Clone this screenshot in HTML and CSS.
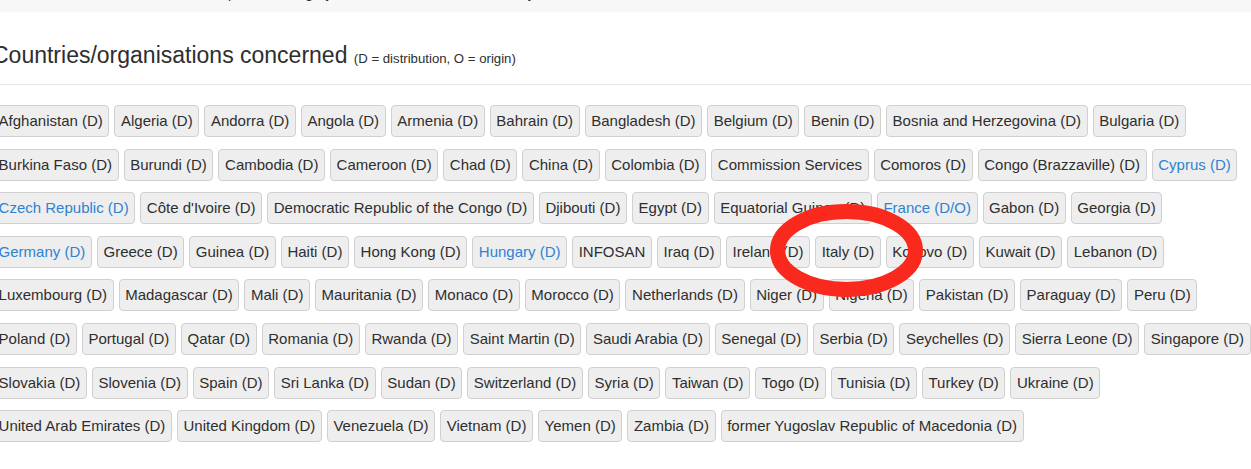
FILE: index.html
```html
<!DOCTYPE html>
<html lang="en">
<head>
    <meta charset="UTF-8">
    <title>Countries/organisations concerned</title>
    <link rel="stylesheet" href="styles.css">
</head>
<body>

    <!-- Strip of the block above -->
    <div class="topbar">
        <p>Notification details and the product category are listed above in the summary of this notification for the members of the network</p>
    </div>

    <div class="section">
        <h3 class="section-title">Countries/organisations concerned <small>(D = distribution, O = origin)</small></h3>

        <div class="tags">
            <span class="tag">Afghanistan (D)</span>
            <span class="tag">Algeria (D)</span>
            <span class="tag">Andorra (D)</span>
            <span class="tag">Angola (D)</span>
            <span class="tag">Armenia (D)</span>
            <span class="tag">Bahrain (D)</span>
            <span class="tag">Bangladesh (D)</span>
            <span class="tag">Belgium (D)</span>
            <span class="tag">Benin (D)</span>
            <span class="tag">Bosnia and Herzegovina (D)</span>
            <span class="tag">Bulgaria (D)</span>
            <span class="tag">Burkina Faso (D)</span>
            <span class="tag">Burundi (D)</span>
            <span class="tag">Cambodia (D)</span>
            <span class="tag">Cameroon (D)</span>
            <span class="tag">Chad (D)</span>
            <span class="tag">China (D)</span>
            <span class="tag">Colombia (D)</span>
            <span class="tag">Commission Services</span>
            <span class="tag">Comoros (D)</span>
            <span class="tag">Congo (Brazzaville) (D)</span>
            <span class="tag member">Cyprus (D)</span>
            <span class="tag member">Czech Republic (D)</span>
            <span class="tag">Côte d'Ivoire (D)</span>
            <span class="tag">Democratic Republic of the Congo (D)</span>
            <span class="tag">Djibouti (D)</span>
            <span class="tag">Egypt (D)</span>
            <span class="tag">Equatorial Guinea (D)</span>
            <span class="tag member">France (D/O)</span>
            <span class="tag">Gabon (D)</span>
            <span class="tag">Georgia (D)</span>
            <span class="tag member">Germany (D)</span>
            <span class="tag">Greece (D)</span>
            <span class="tag">Guinea (D)</span>
            <span class="tag">Haiti (D)</span>
            <span class="tag">Hong Kong (D)</span>
            <span class="tag member">Hungary (D)</span>
            <span class="tag">INFOSAN</span>
            <span class="tag">Iraq (D)</span>
            <span class="tag">Ireland (D)</span>
            <span class="tag">Italy (D)</span>
            <span class="tag">Kosovo (D)</span>
            <span class="tag">Kuwait (D)</span>
            <span class="tag">Lebanon (D)</span>
            <span class="tag">Luxembourg (D)</span>
            <span class="tag">Madagascar (D)</span>
            <span class="tag">Mali (D)</span>
            <span class="tag">Mauritania (D)</span>
            <span class="tag">Monaco (D)</span>
            <span class="tag">Morocco (D)</span>
            <span class="tag">Netherlands (D)</span>
            <span class="tag">Niger (D)</span>
            <span class="tag">Nigeria (D)</span>
            <span class="tag">Pakistan (D)</span>
            <span class="tag">Paraguay (D)</span>
            <span class="tag">Peru (D)</span>
            <span class="tag">Poland (D)</span>
            <span class="tag">Portugal (D)</span>
            <span class="tag">Qatar (D)</span>
            <span class="tag">Romania (D)</span>
            <span class="tag">Rwanda (D)</span>
            <span class="tag">Saint Martin (D)</span>
            <span class="tag">Saudi Arabia (D)</span>
            <span class="tag">Senegal (D)</span>
            <span class="tag">Serbia (D)</span>
            <span class="tag">Seychelles (D)</span>
            <span class="tag">Sierra Leone (D)</span>
            <span class="tag">Singapore (D)</span>
            <span class="tag">Slovakia (D)</span>
            <span class="tag">Slovenia (D)</span>
            <span class="tag">Spain (D)</span>
            <span class="tag">Sri Lanka (D)</span>
            <span class="tag">Sudan (D)</span>
            <span class="tag">Switzerland (D)</span>
            <span class="tag">Syria (D)</span>
            <span class="tag">Taiwan (D)</span>
            <span class="tag">Togo (D)</span>
            <span class="tag">Tunisia (D)</span>
            <span class="tag">Turkey (D)</span>
            <span class="tag">Ukraine (D)</span>
            <span class="tag">United Arab Emirates (D)</span>
            <span class="tag">United Kingdom (D)</span>
            <span class="tag">Venezuela (D)</span>
            <span class="tag">Vietnam (D)</span>
            <span class="tag">Yemen (D)</span>
            <span class="tag">Zambia (D)</span>
            <span class="tag">former Yugoslav Republic of Macedonia (D)</span>
        </div>
    </div>

    <!-- Red marker drawn over Italy -->
    <svg class="marker" width="1251" height="469" viewBox="0 0 1251 469">
        <ellipse cx="846.5" cy="250.5" rx="69" ry="39" fill="none" stroke="#f9291d" stroke-width="15"/>
    </svg>

</body>
</html>
```

FILE: styles.css
```css
html, body {
    overflow: hidden;
}
body {
    font-family: "Liberation Sans", Arial, sans-serif;
    margin: 0;
    padding: 0;
    background-color: #fff;
    color: #2e2e2e;
    position: relative;
}
/* Strip of the block above */
.topbar {
    height: 12px;
    background-color: #f7f7f7;
    overflow: hidden;
}
.topbar p {
    margin: -17px 0 0 60px;
    font-size: 14px;
    line-height: 20px;
    white-space: nowrap;
}
/* Section */
.section {
    margin-left: -8px;
}
.section-title {
    margin: 31.4px 0 0;
    padding-bottom: 12.6px;
    border-bottom: 1px solid #e5e5e5;
    font-size: 23px;
    font-weight: normal;
    line-height: 25px;
    white-space: nowrap;
}
.section-title small {
    font-size: 13.2px;
}
.tags {
    display: flex;
    flex-wrap: wrap;
    gap: 11.6px 5px;
    width: 1270px;
    margin-top: 20px;
}
.tag {
    box-sizing: border-box;
    height: 32px;
    padding: 0 5.6px;
    border: 1px solid #d0d0d0;
    border-radius: 4px;
    background-color: #eeeeee;
    font-size: 15px;
    line-height: 30px;
    white-space: nowrap;
}
.tag.member {
    color: #2f82d3;
}
/* Marker */
.marker {
    position: absolute;
    top: 0;
    left: 0;
    pointer-events: none;
}
```
